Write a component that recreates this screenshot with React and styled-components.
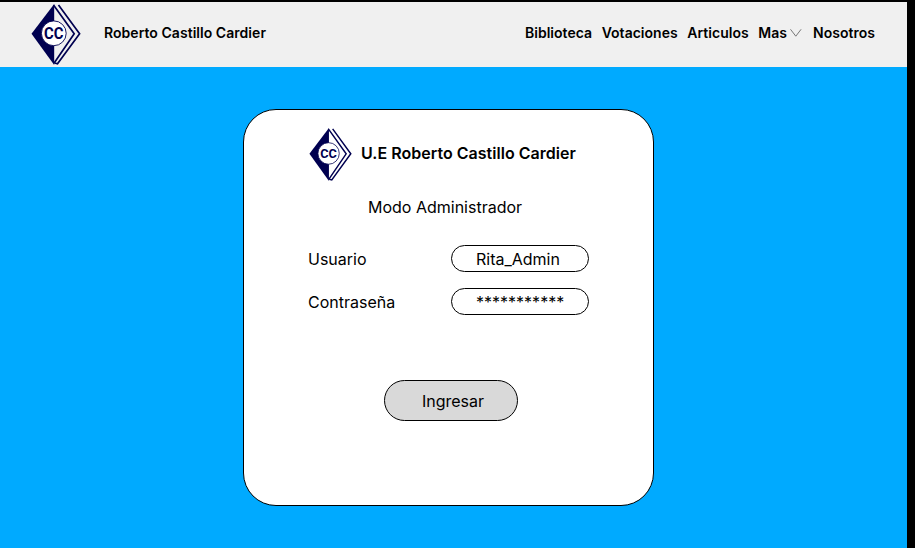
import React from "react";
import styled, { createGlobalStyle } from "styled-components";

const GlobalStyle = createGlobalStyle`
  * { box-sizing: border-box; }
  body { margin: 0; background: #000; font-family: Inter, sans-serif; color: #000; overflow: hidden; }
`;

const Page = styled.div`
  width: 907px;
  height: 548px;
  padding-top: 2px;
  display: flex;
  flex-direction: column;
  background: #000;
`;

const Header = styled.header`
  height: 65px;
  flex: none;
  display: flex;
  align-items: center;
  padding: 0 32px 0 31px;
  background: #f0f0f0;
`;

const SchoolName = styled.span`
  margin: 0 0 3px 23px;
  font-size: 14px;
  font-weight: 600;
  letter-spacing: 0.04px;
  line-height: 20px;
  white-space: nowrap;
`;

const Nav = styled.nav`
  display: flex;
  margin: 0 0 4px auto;
  gap: 9.6px;
`;

const NavLink = styled.a`
  display: flex;
  align-items: center;
  gap: 3.5px;
  font-size: 14px;
  font-weight: 600;
  letter-spacing: 0.02px;
  line-height: 20px;
  white-space: nowrap;
`;

const Main = styled.main`
  flex: 1;
  display: flex;
  align-items: flex-start;
  padding: 42px 0 0 243px;
  background: #00aaff;
`;

const Card = styled.form`
  width: 411px;
  height: 397px;
  display: flex;
  flex-direction: column;
  border: 1px solid #000;
  border-radius: 33px;
  background: #fff;
`;

const Brand = styled.div`
  height: 54px;
  display: flex;
  align-items: center;
  margin: 17px 0 0 65px;
`;

const BrandName = styled.h1`
  margin: 0 0 2px 9px;
  font-size: 16px;
  font-weight: 600;
  letter-spacing: 0.03px;
  line-height: 20px;
  white-space: nowrap;
`;

const Mode = styled.h2`
  margin: 16px 0 0 124px;
  font-size: 16px;
  font-weight: 400;
  line-height: 20px;
`;

const Field = styled.label`
  height: 27px;
  display: flex;
  align-items: center;
  margin: ${(p) => p.$gap}px 64px 0 64px;
  font-size: 16px;
`;

const Pill = styled.span`
  width: 138px;
  height: 27px;
  margin-left: auto;
  padding: 1px 0 0 24px;
  border: 1px solid #000;
  border-radius: 14px;
  line-height: 25px;
`;

const Submit = styled.button`
  width: 134px;
  height: 41px;
  margin: 65px 0 0 140px;
  padding: 0 0 0 4px;
  border: 1px solid #000;
  border-radius: 21px;
  background: #d9d9d9;
  color: #000;
  font: 400 16px Inter, sans-serif;
`;

const Logo = ({ width, height }) => (
  <svg width={width} height={height} viewBox="0 0 50 61" preserveAspectRatio="none">
    <path d="M27.5 1 L48.6 29.7 L26.5 59.8 L23.5 59" fill="none" stroke="#000050" strokeWidth="1.7" />
    <path d="M22.5 1 L43.2 29.7 L23 59.2" fill="none" stroke="#000050" strokeWidth="1.7" />
    <path d="M23.2 0 L.5 29.7 L23.2 61 Z" fill="#000050" />
    <circle cx="22.8" cy="29.3" r="12.4" fill="#fff" stroke="#000050" strokeWidth=".9" />
    <text x="13" y="34.9" textLength="19.4" lengthAdjust="spacingAndGlyphs" fontFamily="Roboto, sans-serif" fontSize="15.6" fontWeight="700" fill="#000050">CC</text>
  </svg>
);

const Chevron = () => (
  <svg width="13" height="8" viewBox="0 0 13 8">
    <path d="M.5 .3 L5.8 7.2 L11.1 .3" fill="none" stroke="#777" strokeWidth="1" />
  </svg>
);

export default function App() {
  return (
    <>
      <GlobalStyle />
      <Page>
        <Header>
          <Logo width={50} height={61} />
          <SchoolName>Roberto Castillo Cardier</SchoolName>
          <Nav>
            <NavLink>Biblioteca</NavLink>
            <NavLink>Votaciones</NavLink>
            <NavLink>Articulos</NavLink>
            <NavLink>Mas <Chevron /></NavLink>
            <NavLink>Nosotros</NavLink>
          </Nav>
        </Header>
        <Main>
          <Card>
            <Brand>
              <Logo width={43} height={53} />
              <BrandName>U.E Roberto Castillo Cardier</BrandName>
            </Brand>
            <Mode>Modo Administrador</Mode>
            <Field $gap={28}>Usuario<Pill>Rita_Admin</Pill></Field>
            <Field $gap={16}>Contraseña<Pill>***********</Pill></Field>
            <Submit type="button">Ingresar</Submit>
          </Card>
        </Main>
      </Page>
    </>
  );
}
